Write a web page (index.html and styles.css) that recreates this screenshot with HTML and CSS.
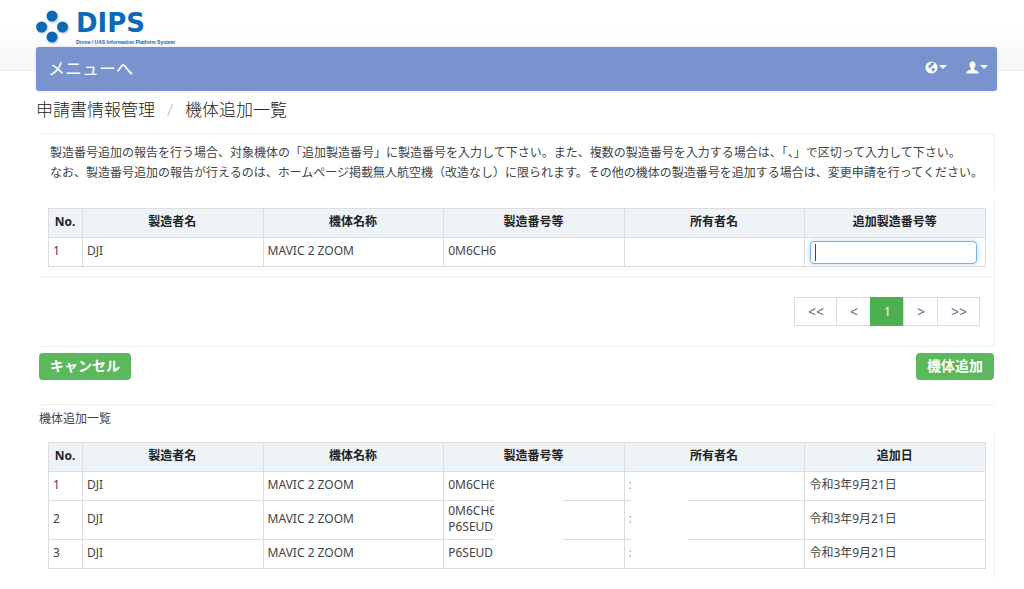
FILE: index.html
```html
<!DOCTYPE html>
<html lang="ja">
<head>
<meta charset="utf-8">
<title>機体追加一覧 | DIPS</title>
<link rel="stylesheet" href="styles.css">
</head>
<body>
<div class="page">
  <header>
    <a class="logo" href="#">
      <svg class="logo-mark" width="34" height="34" viewBox="0 0 34 34" aria-hidden="true">
        <g fill="#d3d9e6"><circle cx="17" cy="7.500" r="6"/><circle cx="6.500" cy="18" r="6"/><circle cx="27.500" cy="18" r="6"/><circle cx="17" cy="28" r="6"/></g>
        <g fill="#0b6ab5"><circle cx="16" cy="6" r="5.500"/><circle cx="5.600" cy="17" r="5.500"/><circle cx="26.500" cy="17" r="5.500"/><circle cx="16" cy="27" r="5.500"/></g>
      </svg>
      <span class="logo-words">
        <span class="logo-name">DIPS</span>
        <span class="logo-tag">Drone / UAS Information Platform System</span>
      </span>
    </a>
    <nav class="navbar">
      <a class="menu-link" href="#">メニューへ</a>
      <div class="nav-tools">
        <button class="nav-button" type="button" aria-label="言語">
          <svg width="13" height="13" viewBox="0 0 13 13" aria-hidden="true"><circle cx="6.500" cy="6.500" r="6" fill="#fff"/><path fill="#7893cd" d="M7 1.200l2.500 1-.4 1.200-1.500.3.300 1.100-1.300.8-.6 1-1.200-.2.200 1.100-1.200-.5-.5-1.500.6-1.300 1.500-.6.500-1.200zM6.600 7.200l2-.1 1.500 1-.9 1.700-1.500 1.200-.5-1.700-1-1z"/></svg>
          <span class="caret"></span>
        </button>
        <button class="nav-button" type="button" aria-label="ユーザー">
          <svg width="13" height="13" viewBox="0 0 13 13" aria-hidden="true"><path fill="#fff" d="M6.500.5C8.500.5 9.600 1.900 9.500 3.800 9.500 5.200 8.900 6.500 8.100 7.300V8.400C8.500 9.100 12.500 9.600 12.500 11.200V12.500H.5V11.200C.5 9.600 4.500 9.100 4.900 8.400V7.300C4.100 6.500 3.500 5.200 3.500 3.800 3.400 1.900 4.500.5 6.500.5Z"/></svg>
          <span class="caret"></span>
        </button>
      </div>
    </nav>
  </header>

  <h1 class="breadcrumb"><span>申請書情報管理</span><span class="slash">/</span><span>機体追加一覧</span></h1>

  <main>
    <section class="panel">
      <p class="intro edge">製造番号追加の報告を行う場合、対象機体の「追加製造番号」に製造番号を入力して下さい。また、複数の製造番号を入力する場合は、「、」で区切って入力して下さい。<br>なお、製造番号追加の報告が行えるのは、ホームページ掲載無人航空機（改造なし）に限られます。その他の機体の製造番号を追加する場合は、変更申請を行ってください。</p>
      <div class="table-area edge">
        <table>
          <thead>
            <tr><th class="no">No.</th><th>製造者名</th><th>機体名称</th><th>製造番号等</th><th>所有者名</th><th id="add-label">追加製造番号等</th></tr>
          </thead>
          <tbody>
            <tr><td>1</td><td>DJI</td><td>MAVIC 2 ZOOM</td><td>0M6CH6</td><td></td><td class="entry"><input class="serial" type="text" aria-labelledby="add-label"></td></tr>
          </tbody>
        </table>
      </div>
    </section>

    <nav class="panel pager-panel edge" aria-label="ページ">
      <ul class="pager">
        <li><a href="#">&lt;&lt;</a></li>
        <li><a href="#">&lt;</a></li>
        <li><a class="active" href="#">1</a></li>
        <li><a href="#">&gt;</a></li>
        <li><a href="#">&gt;&gt;</a></li>
      </ul>
    </nav>

    <section class="panel actions">
      <button class="btn" type="button">キャンセル</button>
      <button class="btn" type="button">機体追加</button>
    </section>

    <section class="panel">
      <h2 class="list-title">機体追加一覧</h2>
      <div class="table-area edge">
        <table>
          <thead>
            <tr><th class="no">No.</th><th>製造者名</th><th>機体名称</th><th>製造番号等</th><th>所有者名</th><th>追加日</th></tr>
          </thead>
          <tbody>
            <tr><td>1</td><td>DJI</td><td>MAVIC 2 ZOOM</td><td class="masked">0M6CH6<span class="mask mask-serial"></span></td><td class="masked faint">:<span class="mask mask-owner"></span></td><td>令和3年9月21日</td></tr>
            <tr><td>2</td><td>DJI</td><td>MAVIC 2 ZOOM</td><td class="masked">0M6CH6<br>P6SEUD<span class="mask mask-serial"></span></td><td class="masked faint">:<span class="mask mask-owner"></span></td><td>令和3年9月21日</td></tr>
            <tr><td>3</td><td>DJI</td><td>MAVIC 2 ZOOM</td><td class="masked">P6SEUD<span class="mask mask-serial last"></span></td><td class="masked faint">:<span class="mask mask-owner last"></span></td><td>令和3年9月21日</td></tr>
          </tbody>
        </table>
      </div>
    </section>
  </main>
</div>
</body>
</html>
```
FILE: styles.css
```css
* { box-sizing: border-box; }

body {
  margin: 0;
  background: #fff linear-gradient(#fff 30%, #f7f7f7 98%, #e9e9e9) no-repeat 0 0 / 100% 71px;
  color: #444;
  font-family: "Noto Sans", "Noto Sans CJK JP", sans-serif;
  font-size: 12px;
  line-height: 16px;
}

.page { padding: 5px 27px 0 36px; }

.logo {
  display: flex;
  align-items: center;
  gap: 6px;
  height: 42px;
  color: #0b6ab5;
  text-decoration: none;
}
.logo-mark { flex: none; margin-top: 2px; }
.logo-words { display: flex; flex-direction: column; }
.logo-name {
  font-family: "DejaVu Sans", sans-serif;
  font-size: 26px;
  font-weight: bold;
  line-height: 32px;
}
.logo-tag {
  font-family: "Liberation Sans", sans-serif;
  font-size: 5px;
  font-weight: bold;
  line-height: 6px;
  white-space: nowrap;
}

.navbar {
  display: flex;
  align-items: center;
  justify-content: space-between;
  height: 44px;
  padding: 0 9px 0 12px;
  border-radius: 3px;
  background: #7893cd;
  box-shadow: 0 0 3px #d5dced;
}
.menu-link {
  color: #fff;
  font-size: 17px;
  line-height: 24px;
  text-decoration: none;
}
.nav-tools { display: flex; gap: 19px; padding-bottom: 4px; }
.nav-button {
  display: flex;
  align-items: center;
  gap: 1px;
  padding: 0;
  border: 0;
  background: none;
}
.caret {
  border: 4px solid transparent;
  border-top-color: #fff;
  border-bottom: 0;
}

.breadcrumb {
  display: flex;
  gap: 12px;
  margin: 0;
  padding: 7px 0 11px;
  color: #222;
  font-size: 17px;
  font-weight: 300;
  line-height: 24px;
}
.slash { color: #bbb; }

main { padding: 0 2px 0 3px; }
.panel { border-top: 1px solid #eee; border-radius: 3px; }
.edge { border-right: 1px solid #eee; }

.intro {
  margin: 0 0 10px;
  padding: 9px 0 7px 11px;
  line-height: 20px;
  white-space: nowrap;
}
.table-area { padding: 8px 8px 9px 9px; }

table {
  width: 100%;
  border-collapse: collapse;
  table-layout: fixed;
}
th, td {
  height: 29px;
  padding: 2px 5px 4px 4px;
  border: 1px solid #ddd;
  text-align: left;
}
th {
  background: #eef3f8;
  color: #222;
  text-align: center;
}
.no { width: 34px; }
.entry { padding: 0 8px 0 5px; }
.serial {
  display: block;
  width: 100%;
  height: 23px;
  padding: 0 6px;
  border: 1px solid #7fb2dc;
  border-radius: 4px;
  outline: 0;
  background: #fff linear-gradient(#444, #444) no-repeat 4px center / 1px 17px;
  box-shadow: 0 0 6px #b5dcf5;
  font: inherit;
}

.pager-panel { padding: 20px 14px 20px 15px; }
.pager {
  display: flex;
  justify-content: flex-end;
  margin: 0;
  padding: 0;
  list-style: none;
}
.pager a {
  display: block;
  padding: 5px 12px 5px 13px;
  border: 1px solid #ddd;
  border-right: 0;
  color: #557186;
  font-size: 14px;
  line-height: 17px;
  text-decoration: none;
}
.pager li:last-child a { border-right: 1px solid #ddd; }
.pager .active {
  border-color: #4caf50;
  background: #4caf50;
  color: #fff;
  font-size: 12px;
}

.actions {
  display: flex;
  align-items: flex-start;
  justify-content: space-between;
  padding: 6px 1px 24px 0;
}
.btn {
  padding: 3px 11px 4px;
  border: 0;
  border-radius: 4px;
  background: #5cb85c;
  color: #fff;
  font-family: inherit;
  font-size: 14px;
  font-weight: bold;
  line-height: 20px;
}

.list-title {
  margin: 0;
  padding: 6px 0 7px;
  font-size: 12px;
  font-weight: normal;
  line-height: 16px;
}

.masked { position: relative; }
.faint { color: #999; }
.mask {
  position: absolute;
  top: 1px;
  bottom: -1px;
  background: #fff;
}
.mask.last { bottom: 1px; }
.mask-serial { left: 50px; width: 69px; }
.mask-owner { left: 6px; width: 57px; }
```
